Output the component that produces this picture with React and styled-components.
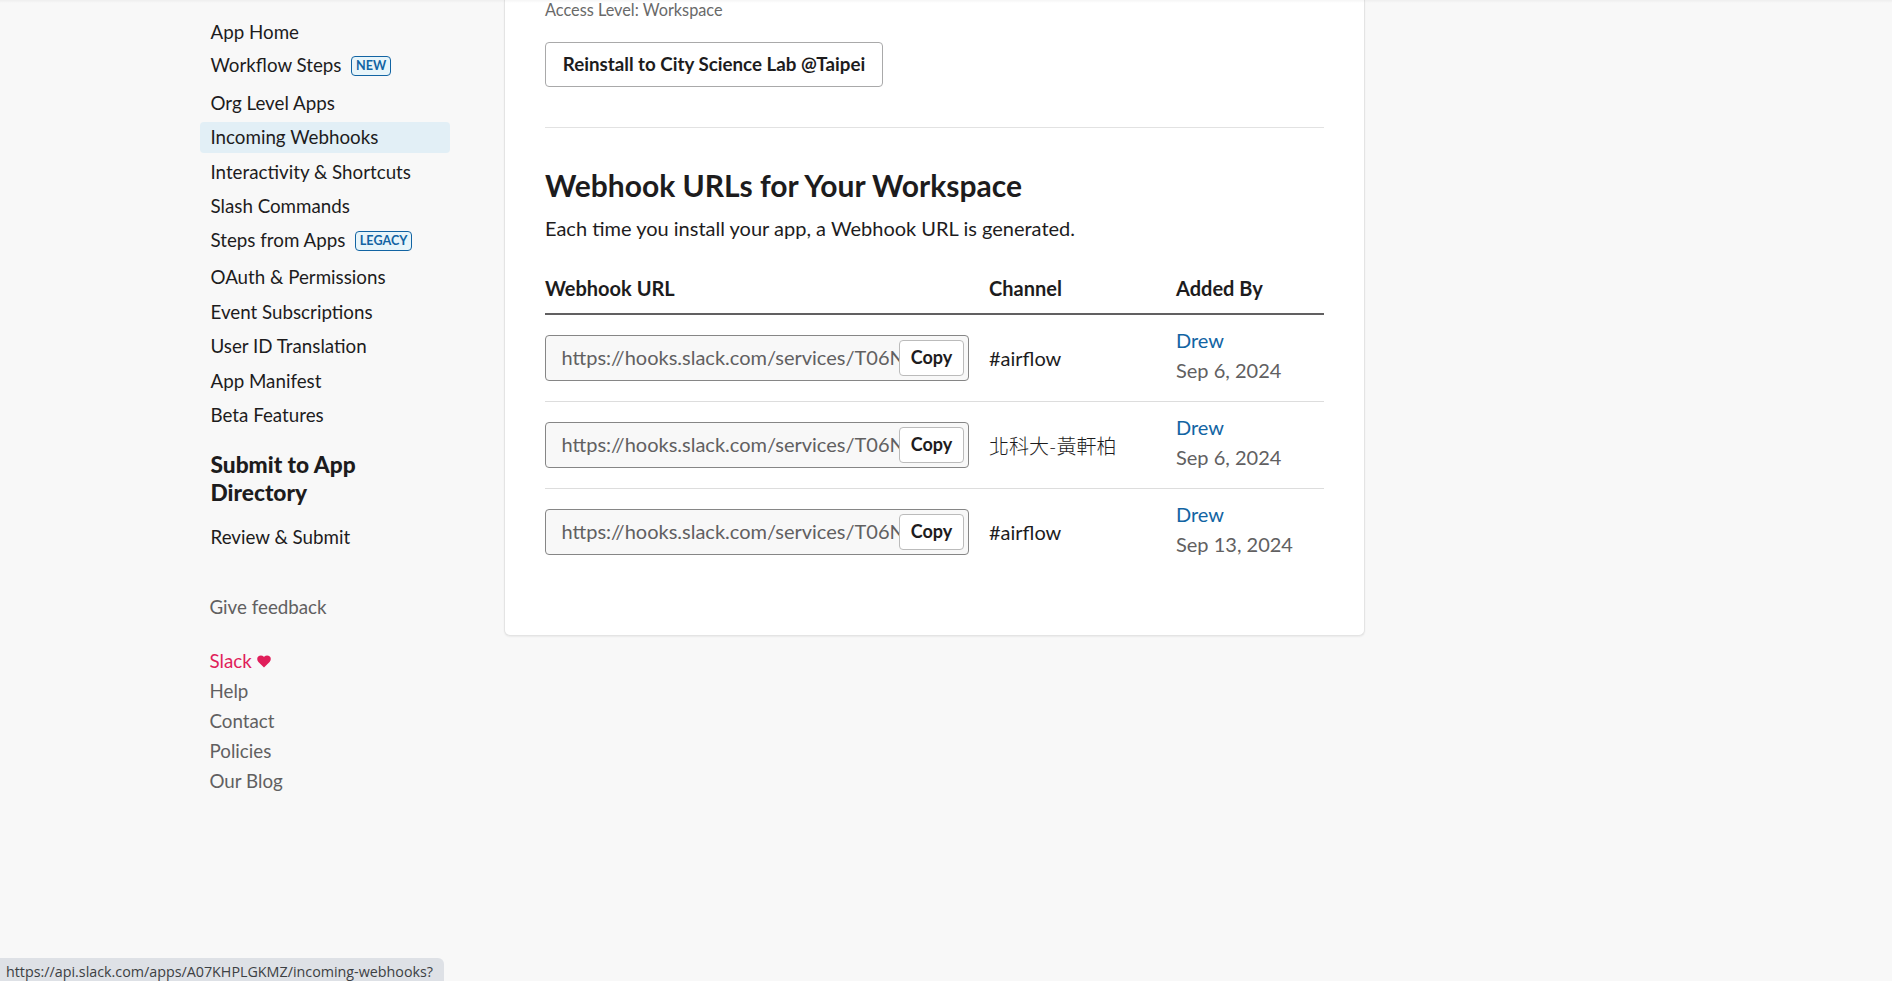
import React from "react";
import styled, { createGlobalStyle } from "styled-components";

const GlobalStyle = createGlobalStyle`
  html, body {
    margin: 0;
    padding: 0;
    height: 100%;
    overflow: hidden;
    background: #f8f8f8;
  }
  * {
    box-sizing: border-box;
  }
  body {
    font-family: Lato, "Noto Sans CJK TC", sans-serif;
    color: #1d1c1d;
  }
`;

const navTop = [
  { label: "App Home" },
  { label: "Workflow Steps", badge: "NEW" },
  { label: "Org Level Apps" },
  { label: "Incoming Webhooks", active: true },
  { label: "Interactivity & Shortcuts" },
  { label: "Slash Commands" },
  { label: "Steps from Apps", badge: "LEGACY" },
  { label: "OAuth & Permissions" },
  { label: "Event Subscriptions" },
  { label: "User ID Translation" },
  { label: "App Manifest" },
  { label: "Beta Features" },
];

const hooks = [
  { channel: "#airflow", date: "Sep 6, 2024" },
  { channel: "北科大-黃軒柏", date: "Sep 6, 2024", thin: true },
  { channel: "#airflow", date: "Sep 13, 2024" },
];

const footerLinks = ["Help", "Contact", "Policies", "Our Blog"];

export default function App() {
  return (
    <Page>
      <GlobalStyle />
      <Sidebar>
        <NavList>
          {navTop.map((item) => (
            <NavItem key={item.label} $active={item.active} $tall={!!item.badge}>
              {item.label}
              {item.badge && <Badge>{item.badge}</Badge>}
            </NavItem>
          ))}
        </NavList>
        <NavHeading>Submit to App Directory</NavHeading>
        <NavItem>Review &amp; Submit</NavItem>
        <Feedback>Give feedback</Feedback>
        <FooterList>
          <SlackLove>
            Slack
            <svg width="14" height="13" viewBox="0 0 14 13">
              <path
                d="M7 12.6 1.4 6.9C-.2 5.2-.1 2.9 1.2 1.6 2.7.1 5.2.1 6.6 1.6l.4.5.4-.5c1.4-1.5 3.9-1.5 5.4 0 1.3 1.3 1.4 3.6-.2 5.3L7 12.6Z"
                fill="#e01e5a"
              />
            </svg>
          </SlackLove>
          {footerLinks.map((link) => (
            <FooterLink key={link}>{link}</FooterLink>
          ))}
        </FooterList>
      </Sidebar>
      <Card>
        <AccessLevel>Access Level: Workspace</AccessLevel>
        <ReinstallButton>Reinstall to City Science Lab @Taipei</ReinstallButton>
        <Divider />
        <Title>Webhook URLs for Your Workspace</Title>
        <Intro>Each time you install your app, a Webhook URL is generated.</Intro>
        <HeadRow>
          <span>Webhook URL</span>
          <span>Channel</span>
          <span>Added By</span>
        </HeadRow>
        {hooks.map((hook, i) => (
          <HookRow key={i} $last={i === hooks.length - 1}>
            <UrlField>
              <UrlInput readOnly value="https://hooks.slack.com/services/T06NKLQ4R7H/B07KHPLGKMZ/x8s2d" />
              <CopyButton>Copy</CopyButton>
            </UrlField>
            <Channel $thin={hook.thin}>{hook.channel}</Channel>
            <AddedBy>
              <UserLink>Drew</UserLink>
              <DateText>{hook.date}</DateText>
            </AddedBy>
          </HookRow>
        ))}
      </Card>
      <StatusBar>https://api.slack.com/apps/A07KHPLGKMZ/incoming-webhooks?</StatusBar>
    </Page>
  );
}

const Page = styled.div`
  position: relative;
  display: flex;
  align-items: flex-start;
  height: 100vh;
  padding-left: 200px;
  background: #f8f8f8;
  overflow: hidden;
  &::before {
    content: "";
    position: absolute;
    top: 0;
    left: 0;
    right: 0;
    height: 3px;
    background: linear-gradient(rgba(0, 0, 0, 0.04), rgba(0, 0, 0, 0));
    z-index: 1;
  }
`;

const Sidebar = styled.nav`
  width: 250px;
  flex: none;
  padding-top: 16px;
  margin-right: 54px;
`;

const NavList = styled.div`
  display: flex;
  flex-direction: column;
`;

const NavItem = styled.div`
  display: flex;
  align-items: center;
  height: 31px;
  padding: 0 11px 1px 10.5px;
  margin-top: ${(p) => (p.$tall ? "-1px" : "0")};
  margin-bottom: ${(p) => (p.$tall ? "6.5px" : "3.5px")};
  font-size: 18.75px;
  line-height: 29px;
  color: #1d1c1d;
  border-radius: 4px;
  background: ${(p) => (p.$active ? "#e2eff6" : "transparent")};
`;

const Badge = styled.span`
  display: inline-block;
  margin: 3px 0 0 10px;
  padding: 0 3.5px;
  height: 20px;
  line-height: 17px;
  font-size: 12.6px;
  font-weight: 700;
  color: #1264a3;
  background: #e8f5fa;
  border: 1.5px solid #1264a3;
  border-radius: 4px;
`;

const NavHeading = styled.h3`
  margin: 17px 0 14px;
  padding: 0 10.5px;
  font-size: 22.7px;
  line-height: 28px;
  font-weight: 900;
  color: #1d1c1d;
`;

const Feedback = styled.div`
  margin-top: 40px;
  padding-left: 9.5px;
  font-size: 18.75px;
  line-height: 30px;
  color: #616061;
`;

const FooterList = styled.div`
  margin-top: 24px;
  padding-left: 9.5px;
  display: flex;
  flex-direction: column;
`;

const FooterLink = styled.div`
  font-size: 18.75px;
  line-height: 30px;
  color: #616061;
`;

const SlackLove = styled(FooterLink)`
  display: flex;
  align-items: center;
  gap: 5px;
  color: #e01e5a;
`;

const Card = styled.main`
  width: 861px;
  height: 636px;
  flex: none;
  padding: 0 40px;
  background: #fff;
  border: 1px solid #e4e4e4;
  border-top: 0;
  border-radius: 0 0 6px 6px;
  box-shadow: 0 1px 2px rgba(0, 0, 0, 0.06);
`;

const AccessLevel = styled.div`
  font-size: 16.3px;
  line-height: 20px;
  color: #696969;
`;

const ReinstallButton = styled.button`
  display: block;
  margin-top: 22px;
  width: 338px;
  height: 45px;
  padding: 0 0 2px;
  background: #fff;
  border: 1px solid #a9a9aa;
  border-radius: 4px;
  font-family: inherit;
  font-size: 18.75px;
  font-weight: 700;
  color: #1d1c1d;
`;

const Divider = styled.hr`
  margin: 40px 0 0;
  border: 0;
  border-top: 1px solid #e2e2e2;
`;

const Title = styled.h2`
  margin: 37px 0 0;
  font-size: 30px;
  line-height: 40px;
  font-weight: 700;
  color: #1d1c1d;
`;

const Intro = styled.p`
  margin: 10px 0 0;
  font-size: 20px;
  line-height: 26px;
  color: #1d1c1d;
`;

const rowGrid = `
  display: grid;
  grid-template-columns: 444px 187px 1fr;
`;

const HeadRow = styled.div`
  ${rowGrid}
  margin-top: 21px;
  height: 53px;
  align-items: center;
  border-bottom: 2px solid #616061;
  font-size: 20px;
  font-weight: 700;
  color: #1d1c1d;
`;

const HookRow = styled.div`
  ${rowGrid}
  height: 87px;
  align-items: center;
  border-bottom: 1px solid ${(p) => (p.$last ? "transparent" : "#dddddd")};
`;

const UrlField = styled.div`
  position: relative;
  width: 424px;
  height: 46px;
`;

const UrlInput = styled.input`
  display: block;
  width: 100%;
  height: 100%;
  padding: 0 69px 2px 15.5px;
  background: #f8f8f8;
  border: 1px solid #868686;
  border-radius: 4px;
  font-family: inherit;
  font-size: 20px;
  color: #616061;
  outline: none;
`;

const CopyButton = styled.button`
  position: absolute;
  top: 5px;
  right: 5px;
  width: 65px;
  height: 36px;
  padding: 0 0 2px;
  background: #fff;
  border: 1px solid #bbbbbb;
  border-radius: 4px;
  font-family: inherit;
  font-size: 18px;
  font-weight: 700;
  color: #1d1c1d;
`;

const Channel = styled.div`
  font-size: 20px;
  font-weight: ${(p) => (p.$thin ? 300 : 400)};
  color: #1d1c1d;
`;

const AddedBy = styled.div`
  display: flex;
  flex-direction: column;
  padding-bottom: 7px;
  font-size: 20px;
  line-height: 30px;
`;

const UserLink = styled.span`
  color: #1264a3;
`;

const DateText = styled.span`
  color: #616061;
`;

const StatusBar = styled.div`
  position: absolute;
  left: 0;
  bottom: 0;
  width: 444px;
  height: 23px;
  padding-left: 6px;
  background: #dee1e6;
  border-top-right-radius: 6px;
  font-family: "Open Sans", sans-serif;
  font-size: 14.3px;
  line-height: 28px;
  color: #3c4043;
  white-space: nowrap;
  overflow: hidden;
`;
